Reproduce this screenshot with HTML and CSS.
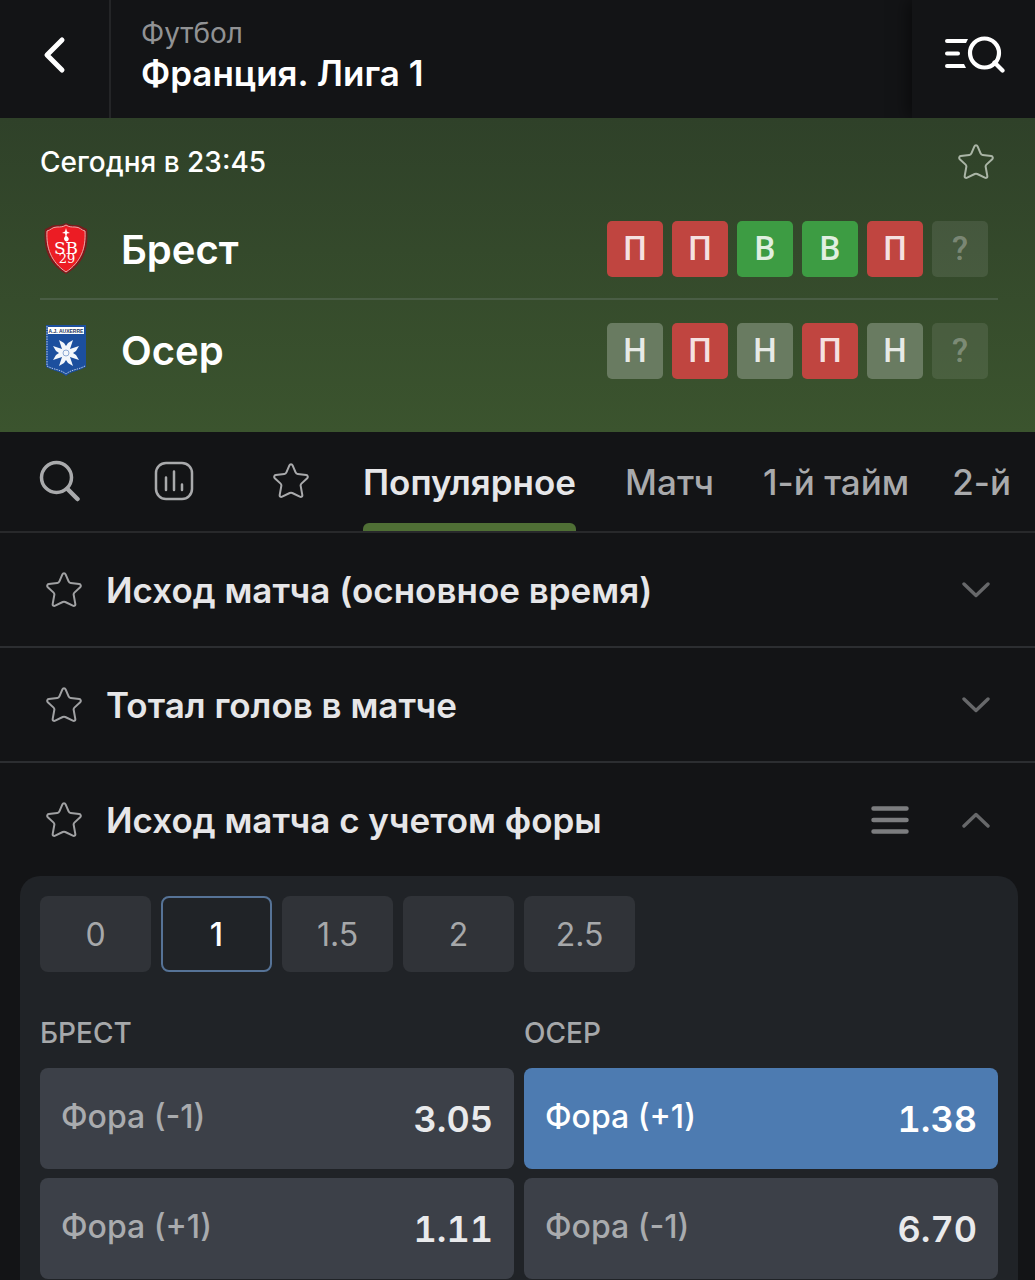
FILE: index.html
```html
<!DOCTYPE html>
<html lang="ru">
  <head>
    <meta charset="utf-8">
    <meta name="viewport" content="width=device-width, initial-scale=1">
    <title>Брест - Осер</title>
    <link rel="stylesheet" href="styles.css">
  </head>
  <body>
    <svg class="sprite" aria-hidden="true">
      <symbol id="star" viewBox="0 0 36 36">
        <path d="M16.4 2.3C17 .8 19 .8 19.6 2.3L22.6 9.4C23 10.3 23.8 10.9 24.7 11L33.2 12.1C34.8 12.3 35.3 14.1 34.2 15.2L28.4 20.6C27.7 21.3 27.5 22.1 27.7 23L29.3 31.9C29.6 33.6 28.2 34.4 26.8 33.7L19.3 30C18.4 29.6 17.6 29.6 16.7 30L9.2 33.7C7.8 34.4 6.4 33.6 6.7 31.9L8.3 23C8.5 22.1 8.3 21.3 7.6 20.6L1.8 15.2C.7 14.1 1.2 12.3 2.8 12.1L11.3 11C12.2 10.9 13 10.3 13.4 9.4Z" fill="none" stroke="currentColor" stroke-width="2"/>
      </symbol>
      <symbol id="chevron" viewBox="0 0 28 16">
        <path d="M2 2L14 13.500L26 2" fill="none" stroke="currentColor" stroke-width="3.400" stroke-linecap="round" stroke-linejoin="round"/>
      </symbol>
    </svg>

    <header class="header">
      <button class="back" aria-label="Назад">
        <svg width="24" height="38" viewBox="0 0 24 38"><path d="M19 4L4 19L19 34" fill="none" stroke="currentColor" stroke-width="5" stroke-linecap="round" stroke-linejoin="round"/></svg>
      </button>
      <div class="league">
        <div class="sport">Футбол</div>
        <h1>Франция. Лига 1</h1>
      </div>
      <button class="menu-search" aria-label="Поиск">
        <svg width="62" height="38" viewBox="0 0 62 38" fill="none" stroke="currentColor">
          <path d="M4 4H25L23 8H4A2 2 0 0 1 4 4ZM4 16.500H15A2 2 0 0 1 15 20.500H4A2 2 0 0 1 4 16.500ZM4 29H21L23 33H4A2 2 0 0 1 4 29Z" fill="currentColor" stroke="none"/>
          <circle cx="41.500" cy="18" r="14.500" stroke-width="4.200"/>
          <path d="M51.500 27.500L59.500 35.500" stroke-width="4.200" stroke-linecap="round"/>
        </svg>
      </button>
    </header>

    <section class="match">
      <div class="match-top">
        <time>Сегодня в 23:45</time>
        <button class="star" aria-label="В избранное"><svg><use href="#star"/></svg></button>
      </div>

      <div class="team">
        <svg class="logo" viewBox="0 0 50 52">
          <path d="M5 6C9 5 11 2 16 2C20 2 22 2 26 0C30 2 32 2 36 2C41 2 43 5 47 6C49 25 44 41 26 51C8 41 3 25 5 6Z" fill="#7c1a1c"/>
          <path d="M7 8C11 7 12 4 17 4C21 4 23 4 26 2C29 4 31 4 35 4C40 4 41 7 45 8C46 25 41 39 26 49C11 39 6 25 7 8Z" fill="#ec1c24" stroke="#f0aaa8" stroke-width="1"/>
          <path d="M26 5L27 8.500L30 10L27 10.500L26.500 13C30 15 29 18 26.500 18.500C24 18 23 15 25.500 13L25 10.500L22 10L25 8.500Z" fill="#fff"/>
          <text x="26" y="31" class="logo-sb">SB<tspan x="27" y="40" class="logo-29">29</tspan></text>
        </svg>
        <h2>Брест</h2>
        <div class="form">
          <span class="loss">П</span>
          <span class="loss">П</span>
          <span class="win">В</span>
          <span class="win">В</span>
          <span class="loss">П</span>
          <span class="next">?</span>
        </div>
      </div>

      <div class="team">
        <svg class="logo" viewBox="0 0 50 52">
          <path d="M6 0H46V42C39 46 32 46 26 51C20 46 13 46 6 42Z" fill="#1c4f9e"/>
          <path d="M8 2H44V9H8Z" fill="#fff"/>
          <path d="M7 1V41C14 45 20 44 26 49C32 44 38 45 45 41" fill="none" stroke="#b9cbe6" stroke-width="1" stroke-dasharray="1.500 1"/>
          <text x="26" y="8" class="logo-aja">A.J. AUXERRE</text>
          <g fill="#f2f6fb">
            <path id="ray" d="M26 32L23 27L19 15L24 18L26 21L28 18L33 15L29 27Z"/>
            <use href="#ray" transform="rotate(90 26 28)"/>
            <use href="#ray" transform="rotate(180 26 28)"/>
            <use href="#ray" transform="rotate(270 26 28)"/>
          </g>
          <circle cx="26" cy="28" r="3" fill="none" stroke="#8fabd4" stroke-width="1"/>
        </svg>
        <h2>Осер</h2>
        <div class="form">
          <span class="draw">Н</span>
          <span class="loss">П</span>
          <span class="draw">Н</span>
          <span class="loss">П</span>
          <span class="draw">Н</span>
          <span class="next">?</span>
        </div>
      </div>
    </section>

    <nav class="tabs">
      <div class="tools">
        <button aria-label="Поиск по рынкам">
          <svg width="42" height="42" viewBox="0 0 42 42" fill="none" stroke="currentColor" stroke-linecap="round">
            <circle cx="17.500" cy="17.500" r="15" stroke-width="3.500"/>
            <path d="M28.500 29L38.500 39" stroke-width="4.500"/>
          </svg>
        </button>
        <button aria-label="Статистика">
          <svg width="40" height="40" viewBox="0 0 40 40" fill="none" stroke="currentColor" stroke-linecap="round">
            <rect x="2" y="2" width="36" height="36" rx="10" stroke-width="2.500"/>
            <path d="M12 16.500V29M20 10.500V29M28 23.500V29" stroke-width="2.500"/>
          </svg>
        </button>
        <button class="star" aria-label="Избранные рынки"><svg><use href="#star"/></svg></button>
      </div>
      <a href="#popular" class="active">Популярное</a>
      <a href="#match">Матч</a>
      <a href="#half1">1-й тайм</a>
      <a href="#half2">2-й</a>
    </nav>

    <main id="popular">
      <section class="market">
        <button class="star" aria-label="В избранное"><svg><use href="#star"/></svg></button>
        <h3>Исход матча (основное время)</h3>
        <button class="toggle" aria-label="Развернуть"><svg><use href="#chevron"/></svg></button>
      </section>
      <section class="market">
        <button class="star" aria-label="В избранное"><svg><use href="#star"/></svg></button>
        <h3>Тотал голов в матче</h3>
        <button class="toggle" aria-label="Развернуть"><svg><use href="#chevron"/></svg></button>
      </section>
      <section class="market open">
        <button class="star" aria-label="В избранное"><svg><use href="#star"/></svg></button>
        <h3>Исход матча с учетом форы</h3>
        <button class="list" aria-label="Списком">
          <svg width="38" height="28" viewBox="0 0 38 28"><path d="M2.500 2.500H35.500M2.500 14H35.500M2.500 25.500H35.500" stroke="currentColor" stroke-width="4.500" stroke-linecap="round"/></svg>
        </button>
        <button class="toggle" aria-label="Свернуть"><svg><use href="#chevron"/></svg></button>
      </section>

      <div class="panel">
        <div class="values">
          <button>0</button>
          <button class="selected">1</button>
          <button>1.5</button>
          <button>2</button>
          <button>2.5</button>
        </div>
        <div class="odds">
          <h4>БРЕСТ</h4>
          <h4>ОСЕР</h4>
          <button><span>Фора (-1)</span><b>3.05</b></button>
          <button class="picked"><span>Фора (+1)</span><b>1.38</b></button>
          <button><span>Фора (+1)</span><b>1.11</b></button>
          <button><span>Фора (-1)</span><b>6.70</b></button>
        </div>
      </div>
    </main>
  </body>
</html>
```
FILE: styles.css
```css
* {
  box-sizing: border-box;
}
body {
  margin: 0;
  background-color: #131416;
  color: #e6e6e8;
  font-family: Inter, sans-serif;
}
h1, h2, h3, h4 {
  margin: 0;
  font-weight: 600;
}
button {
  padding: 0;
  border: none;
  background: none;
  color: inherit;
  font-family: inherit;
  cursor: pointer;
}
svg {
  display: block;
}
.sprite {
  display: none;
}
.star svg {
  width: 36px;
  height: 36px;
}

/* header */
.header {
  display: flex;
  height: 118px;
  overflow: hidden;
  color: #fff;
}
.back {
  display: flex;
  align-items: center;
  justify-content: center;
  width: 111px;
  padding-bottom: 8px;
  border-right: 2px solid #242527;
}
.league {
  flex: 1;
  padding: 16px 0 0 30px;
}
.sport {
  color: #919294;
  font-size: 28px;
  line-height: 34px;
}
h1 {
  font-size: 35px;
  line-height: 46px;
}
.menu-search {
  display: flex;
  align-items: center;
  justify-content: center;
  width: 123px;
  padding-bottom: 10px;
  box-shadow: -4px 0 16px rgba(0, 0, 0, 0.5);
}

/* match */
.match {
  padding: 22px 37px 31px 40px;
  background: linear-gradient(#2f4129, #3b542e);
  color: #fff;
}
.match-top {
  display: flex;
  align-items: center;
  justify-content: space-between;
  height: 44px;
  padding-right: 4px;
  font-size: 28px;
  font-weight: 500;
}
.match-top .star {
  color: #aab5a6;
}
.team {
  display: flex;
  align-items: center;
  height: 101px;
  padding-right: 10px;
}
.match-top + .team {
  height: 116px;
  padding-top: 16px;
  border-bottom: 2px solid #4a5d45;
}
.logo {
  width: 50px;
  height: 52px;
  margin-right: 31px;
}
.logo text {
  fill: #fff;
  font-family: "DejaVu Serif", serif;
  text-anchor: middle;
}
.logo .logo-sb {
  font-size: 17px;
}
.logo .logo-29 {
  font-size: 13px;
}
.logo .logo-aja {
  fill: #1c3560;
  font-family: "Liberation Sans", sans-serif;
  font-size: 5px;
  font-weight: 700;
}
h2 {
  flex: 1;
  font-size: 40px;
}
.form {
  display: flex;
  gap: 9px;
}
.form span {
  width: 56px;
  height: 56px;
  border-radius: 5px;
  color: rgba(255, 255, 255, 0.85);
  font-family: Roboto, sans-serif;
  font-size: 33px;
  font-weight: 500;
  line-height: 56px;
  text-align: center;
}
.form .loss {
  background-color: #c04540;
}
.form .win {
  background-color: #3d9c43;
}
.form .draw {
  background-color: #697b61;
}
.form .next {
  background-color: rgba(255, 255, 255, 0.09);
  color: rgba(255, 255, 255, 0.3);
}

/* tabs */
.tabs {
  display: flex;
  height: 101px;
  padding-left: 39px;
  border-bottom: 2px solid #28292b;
  overflow: hidden;
  font-size: 35px;
  line-height: 100px;
  white-space: nowrap;
}
.tools {
  display: flex;
  flex-shrink: 0;
  align-items: center;
  justify-content: space-between;
  width: 270px;
  margin-right: 54px;
  padding-bottom: 2px;
  color: #a9aaac;
}
.tools .star {
  padding-left: 6px;
}
.tabs a {
  margin-right: 49px;
  color: #a9aaac;
  font-weight: 500;
  text-decoration: none;
}
.tabs a:nth-of-type(3) {
  margin-right: 43px;
}
.tabs .active {
  position: relative;
  color: #e6e6e8;
  font-weight: 600;
}
.active::after {
  content: "";
  position: absolute;
  right: 0;
  bottom: 0;
  left: 0;
  height: 8px;
  border-radius: 6px 6px 0 0;
  background-color: #4f6f35;
}

/* markets */
.market {
  display: flex;
  align-items: center;
  height: 115px;
  padding: 0 45px 0 46px;
  border-bottom: 2px solid #2c2e31;
}
.market.open {
  height: 113px;
  border-bottom: none;
}
.market .star {
  margin-right: 24px;
  color: #a0a1a3;
}
h3 {
  flex: 1;
  font-size: 35px;
}
.list {
  margin-right: 53px;
  color: #7c7d7f;
}
.toggle {
  color: #67686a;
}
.toggle svg {
  width: 28px;
  height: 16px;
}
.open .toggle {
  transform: rotate(180deg);
}

/* odds panel */
.panel {
  margin: 0 17px 0 20px;
  padding: 20px 20px 1px;
  border-radius: 20px 20px 0 0;
  background-color: #202327;
}
.values {
  display: flex;
  gap: 10px;
}
.values button {
  width: 111px;
  height: 76px;
  border-radius: 8px;
  background-color: #303338;
  color: #a6a8aa;
  font-size: 32px;
}
.values .selected {
  border: 2px solid #567397;
  background-color: #202327;
  color: #fff;
  font-weight: 500;
}
.odds {
  display: grid;
  grid-template-columns: 1fr 1fr;
  gap: 9px 10px;
  padding-top: 36px;
}
h4 {
  color: #a6a8aa;
  font-size: 28px;
  font-weight: 500;
  line-height: 51px;
}
.odds button {
  display: flex;
  align-items: center;
  justify-content: space-between;
  height: 101px;
  padding: 0 21px;
  border-radius: 8px;
  background-color: #3c4048;
  color: #a9abae;
  font-size: 32px;
  font-weight: 500;
}
.odds span {
  padding-bottom: 4px;
}
.odds b {
  color: #e9eaec;
  font-size: 36px;
  font-weight: 600;
  font-variant-numeric: tabular-nums;
}
.odds .picked {
  background-color: #4d7bb1;
  color: #fff;
}
.odds .picked b {
  color: #fff;
}
```
